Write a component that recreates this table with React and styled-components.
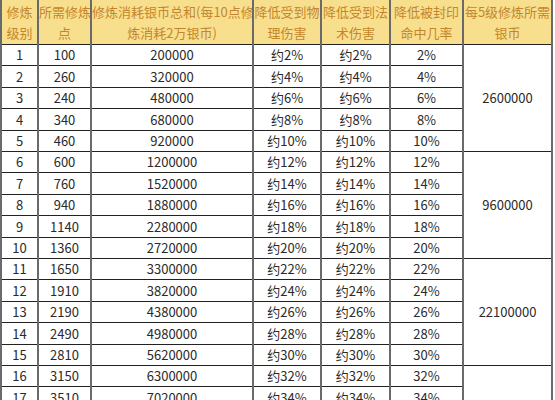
import styled, { createGlobalStyle } from "styled-components";

const GlobalStyle = createGlobalStyle`
  html, body {
    margin: 0;
    padding: 0;
    background: #fff;
  }
  body {
    font-family: "Noto Sans CJK SC", "Noto Sans", sans-serif;
  }
`;

const Page = styled.div`
  width: 555px;
  height: 400px;
  overflow: hidden;
`;

const Table = styled.table`
  border-collapse: collapse;
  table-layout: fixed;
  width: 551px;
  font-size: 13px;
  color: #2a2a2a;
`;

const HeadCell = styled.th`
  height: 44px;
  padding: 0;
  background: #f8df8e;
  color: #c4862a;
  font-weight: normal;
  line-height: 21px;
  text-align: center;
  white-space: nowrap;
  overflow: hidden;
  border-left: 2px solid #6a6a6a;
  border-right: 2px solid #6a6a6a;
  border-bottom: 1px solid #222;
`;

const Cell = styled.td`
  height: ${(p) => p.$h}px;
  padding: 0;
  text-align: center;
  line-height: 14px;
  border-left: 2px solid #6a6a6a;
  border-right: 2px solid #6a6a6a;
  border-top: 1px solid #222;
  border-bottom: 1px solid #222;
`;

const MergedCell = styled(Cell)`
  vertical-align: middle;
`;

const cols = [37, 53, 162, 68, 69, 73, 89];

const headers = [
  ["修炼", "级别"],
  ["所需修炼", "点"],
  ["修炼消耗银币总和(每10点修", "炼消耗2万银币)"],
  ["降低受到物", "理伤害"],
  ["降低受到法", "术伤害"],
  ["降低被封印", "命中几率"],
  ["每5级修炼所需", "银币"],
];

const rows = [
  [100, "200000"],
  [260, "320000"],
  [240, "480000"],
  [340, "680000"],
  [460, "920000"],
  [600, "1200000"],
  [760, "1520000"],
  [940, "1880000"],
  [1140, "2280000"],
  [1360, "2720000"],
  [1650, "3300000"],
  [1910, "3820000"],
  [2190, "4380000"],
  [2490, "4980000"],
  [2810, "5620000"],
  [3150, "6300000"],
  [3510, "7020000"],
];
const groupTotals = ["2600000", "9600000", "22100000", ""];
const heights = [20, 21, 20, 21, 20];

export default function App() {
  return (
    <Page>
      <GlobalStyle />
      <Table>
        <colgroup>
          {cols.map((w, i) => (
            <col key={i} style={{ width: w }} />
          ))}
        </colgroup>
        <thead>
          <tr>
            {headers.map(([a, b], i) => (
              <HeadCell key={i}>
                {a}
                <br />
                {b}
              </HeadCell>
            ))}
          </tr>
        </thead>
        <tbody>
          {rows.map(([pt, silver], i) => {
            const level = i + 1;
            const pct = level * 2;
            const h = heights[i % 5];
            return (
              <tr key={level}>
                <Cell $h={h}>{level}</Cell>
                <Cell $h={h}>{pt}</Cell>
                <Cell $h={h}>{silver}</Cell>
                <Cell $h={h}>约{pct}%</Cell>
                <Cell $h={h}>约{pct}%</Cell>
                <Cell $h={h}>{pct}%</Cell>
                {i % 5 === 0 && (
                  <MergedCell $h={h} rowSpan={Math.min(5, rows.length - i)}>
                    {groupTotals[i / 5]}
                  </MergedCell>
                )}
              </tr>
            );
          })}
        </tbody>
      </Table>
    </Page>
  );
}
